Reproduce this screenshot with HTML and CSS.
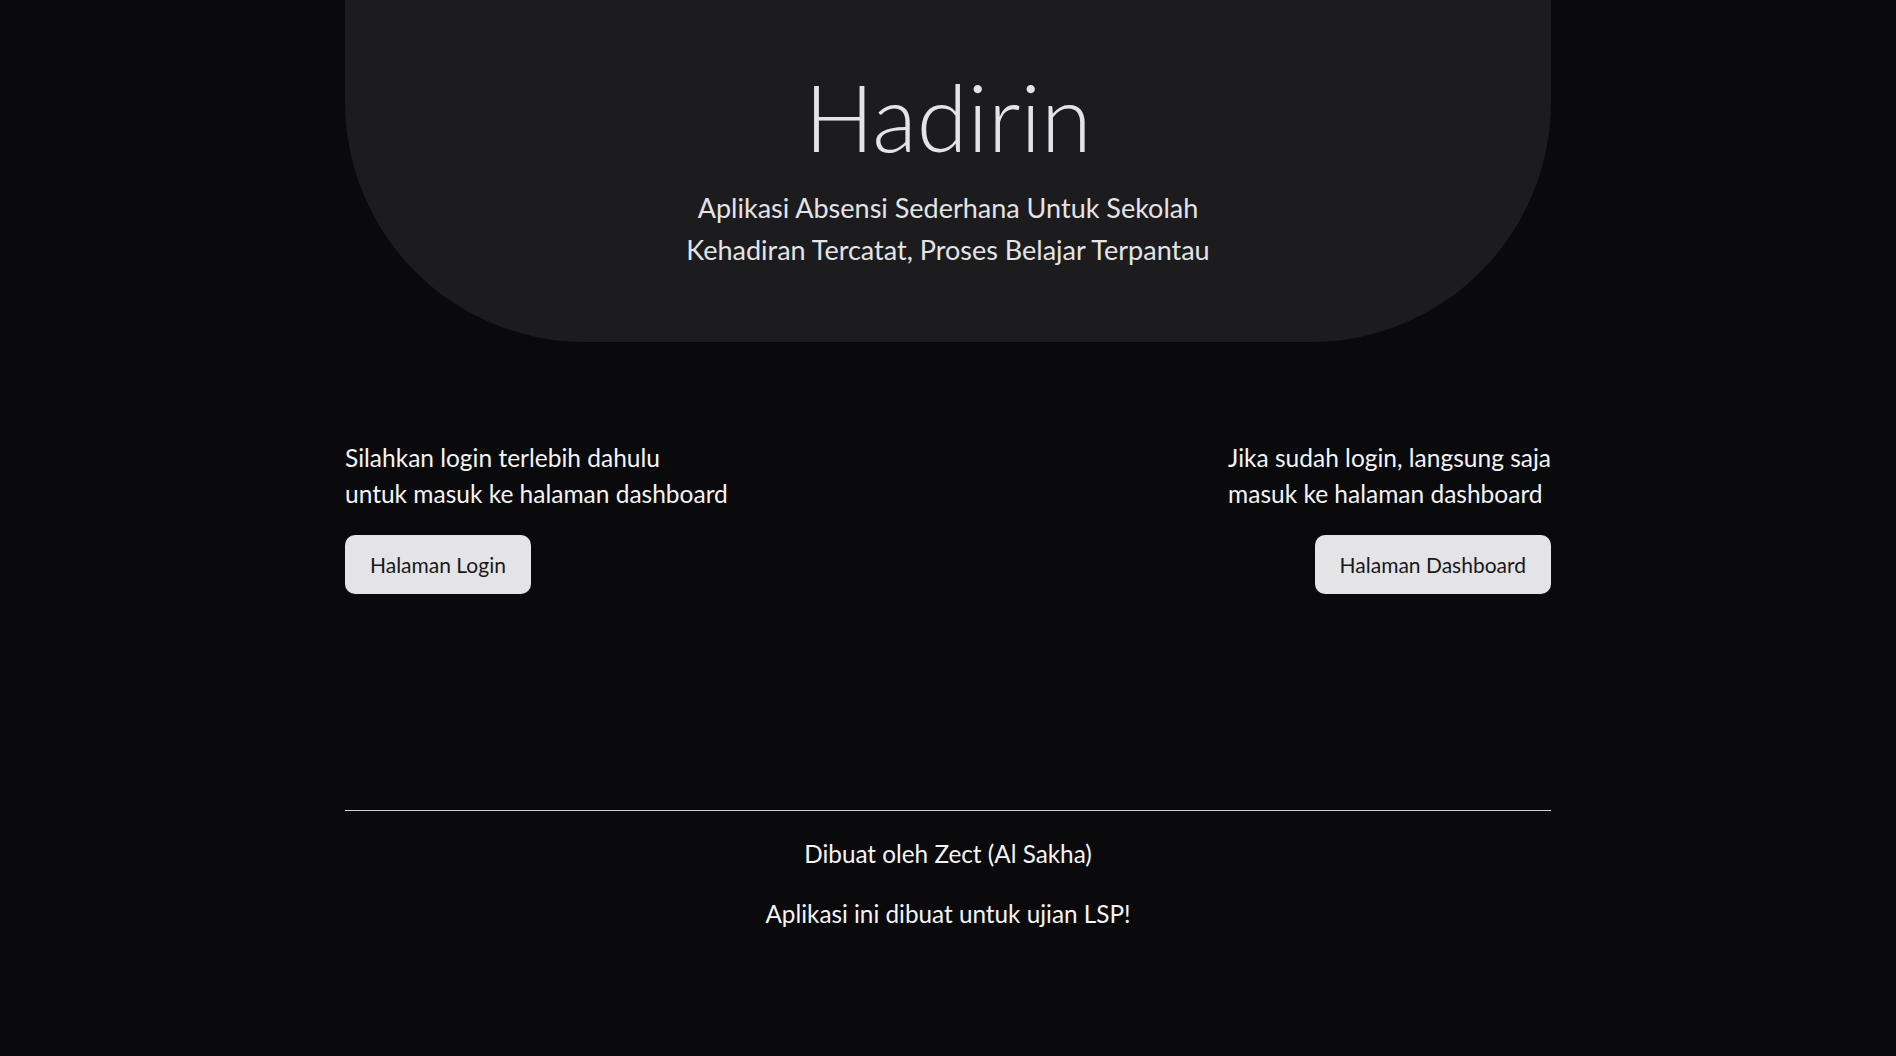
FILE: index.html
```html
<!DOCTYPE html>
<html lang="id">
<head>
<meta charset="utf-8">
<title>Hadirin</title>
<link rel="stylesheet" href="styles.css">
</head>
<body>
<div class="container">
  <header class="hero">
    <h1 class="hero-title">Hadirin</h1>
    <p class="hero-sub">Aplikasi Absensi Sederhana Untuk Sekolah<br>Kehadiran Tercatat, Proses Belajar Terpantau</p>
  </header>

  <main class="actions">
    <div class="action action-start">
      <p class="action-text">Silahkan login terlebih dahulu<br>untuk masuk ke halaman dashboard</p>
      <a class="btn" href="#">Halaman Login</a>
    </div>
    <div class="action action-end">
      <p class="action-text">Jika sudah login, langsung saja<br>masuk ke halaman dashboard</p>
      <a class="btn" href="#">Halaman Dashboard</a>
    </div>
  </main>

  <footer class="footer">
    <hr class="footer-rule">
    <p class="footer-text">Dibuat oleh Zect (Al Sakha)</p>
    <p class="footer-text">Aplikasi ini dibuat untuk ujian LSP!</p>
  </footer>
</div>
</body>
</html>
```

FILE: styles.css
```css
* { box-sizing: border-box; }

html, body {
  margin: 0;
  padding: 0;
  background: #0a0a0c;
  color: #f4f4f5;
  font-family: "Lato", "Open Sans", sans-serif;
}

.container {
  width: 1206px;
  margin: 0 auto;
}

.hero {
  height: 342px;
  background: #1c1c1e;
  border-radius: 0 0 240px 240px;
  text-align: center;
  padding-top: 63px;
}

.hero-title {
  margin: 0 0 16px;
  font-size: 92px;
  font-weight: 300;
  line-height: 108px;
  color: #e4e4e7;
}

.hero-sub {
  margin: 0;
  font-size: 27px;
  line-height: 41.5px;
  font-weight: 400;
  color: #e4e4e7;
}

.actions {
  display: flex;
  justify-content: space-between;
  margin-top: 98px;
}

.action {
  display: flex;
  flex-direction: column;
}

.action-start { align-items: flex-start; }
.action-end { align-items: flex-end; }

.action-text {
  margin: 0 0 23px;
  font-size: 24.5px;
  line-height: 36px;
  color: #f4f4f5;
}

.btn {
  display: inline-block;
  background: #e4e4e7;
  color: #18181b;
  text-decoration: none;
  font-size: 21px;
  line-height: 31px;
  padding: 14px 25px;
  border-radius: 10px;
}

.footer {
  margin-top: 216px;
  text-align: center;
}

.footer-rule {
  margin: 0 0 25px;
  border: 0;
  border-top: 1px solid #d4d4d8;
}

.footer-text {
  margin: 0 0 24px;
  font-size: 24.3px;
  line-height: 36px;
  color: #f4f4f5;
}
```
